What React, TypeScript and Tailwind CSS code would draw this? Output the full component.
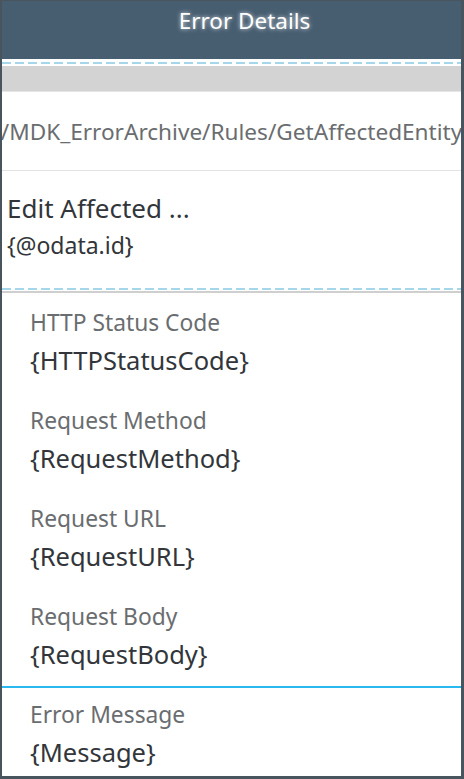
import React from "react";

const fields = [
  { label: "HTTP Status Code", value: "{HTTPStatusCode}" },
  { label: "Request Method", value: "{RequestMethod}" },
  { label: "Request URL", value: "{RequestURL}" },
  { label: "Request Body", value: "{RequestBody}" },
];

function Dashes() {
  return (
    <div className="h-[2px] bg-[repeating-linear-gradient(90deg,#a6d6ea_0_9px,transparent_9px_13px)]" />
  );
}

export default function App() {
  return (
    <div
      className="w-[464px] h-[779px] bg-[#48545e] pl-[2px] pr-[3px] pb-[3px] pt-[1px] overflow-hidden"
      style={{ fontFamily: '"Noto Sans", "Open Sans", Arial, sans-serif' }}
    >
      <div className="h-full bg-white flex flex-col overflow-hidden">
        <div className="h-[58px] bg-[#475e71] flex items-start justify-center pl-[26px] pt-[4px]">
          <span className="text-white text-[22.5px] leading-[32px] [text-shadow:0_0_4px_rgba(255,255,255,0.8)]">
            Error Details
          </span>
        </div>
        <div className="h-[3px] bg-white" />
        <Dashes />
        <div className="h-[2px] bg-white" />
        <div className="h-[26px] bg-[#d3d3d3] border-b border-[#e6e6e6]" />
        <div className="h-[79px] flex items-center justify-center overflow-hidden border-b border-[#e3e3e3]">
          <span className="whitespace-nowrap text-[22.6px] text-[#6a6d70] pt-[1px]">
            /MDK_ErrorArchive/Rules/GetAffectedEntity
          </span>
        </div>
        <div className="h-[117px] flex flex-col pl-[5px] pt-[19px]">
          <span className="text-[26px] leading-[36px] text-[#32363a]">Edit Affected ...</span>
          <span className="text-[23px] leading-[38px] text-[#32363a]">{"{@odata.id}"}</span>
        </div>
        <Dashes />
        <div className="h-[2px] bg-[#cfcfcf] mt-[1px]" />
        <div className="flex flex-col pt-[17px]">
          {fields.map((f) => (
            <div key={f.label} className="pl-[28px] h-[98px] flex flex-col">
              <span className="text-[22.8px] leading-[26px] text-[#6a6d70]">{f.label}</span>
              <span className="text-[25.5px] leading-[48px] text-[#32363a]">{f.value}</span>
            </div>
          ))}
          <div className="h-[2px] bg-[#29b8ef] -mt-[16px]" />
          <div className="pl-[28px] pt-[14px] flex flex-col">
            <span className="text-[22.8px] leading-[26px] text-[#6a6d70]">Error Message</span>
            <span className="text-[25.5px] leading-[48px] text-[#32363a]">{"{Message}"}</span>
          </div>
        </div>
      </div>
    </div>
  );
}
